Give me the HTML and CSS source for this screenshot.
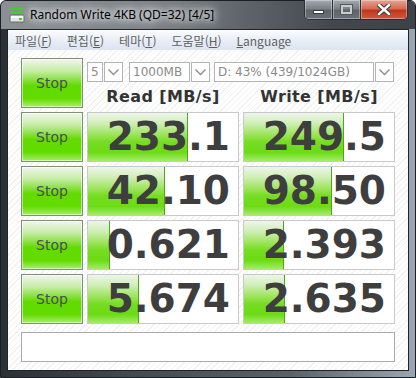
FILE: index.html
```html
<!DOCTYPE html>
<html lang="ko">
<head>
    <meta charset="UTF-8">
    <title>Random Write 4KB (QD=32) [4/5]</title>
    <link rel="stylesheet" href="styles.css">
</head>
<body>

    <div class="window">
        <!-- Title Bar -->
        <div class="titlebar">
            <svg class="app-icon" width="16" height="16" viewBox="0 0 16 16">
                <rect x="1" y="0" width="13" height="3" fill="#3fcf2a"/>
                <rect x="1" y="4" width="13" height="3" fill="#3fcf2a"/>
                <rect x="1" y="8" width="14" height="7" rx="1" fill="#e4e4e4" stroke="#6a6a6a"/>
                <rect x="2" y="9" width="12" height="2" fill="#ffffff"/>
                <rect x="10" y="11" width="3" height="2" fill="#3fcf2a"/>
            </svg>
            <span class="title">Random Write 4KB (QD=32) [4/5]</span>
            <div class="caption-buttons">
                <div class="cap-btn cap-min"><span class="min-glyph"></span></div>
                <div class="cap-btn cap-max"><span class="max-glyph"></span></div>
                <div class="cap-btn cap-close">
                    <svg width="14" height="11" viewBox="0 0 14 11">
                        <path d="M2 1 L12 10 M12 1 L2 10" stroke="#3a3a3a" stroke-width="4.5" stroke-linecap="square"/>
                        <path d="M2 1 L12 10 M12 1 L2 10" stroke="#ffffff" stroke-width="2.5" stroke-linecap="square"/>
                    </svg>
                </div>
            </div>
        </div>

        <!-- Client Area -->
        <div class="client">
            <div class="menubar">
                <span class="menu-item">파일(<u>F</u>)</span>
                <span class="menu-item">편집(<u>E</u>)</span>
                <span class="menu-item">테마(<u>T</u>)</span>
                <span class="menu-item">도움말(<u>H</u>)</span>
                <span class="menu-item"><u>L</u>anguage</span>
            </div>

            <div class="content">
                <div class="bench">
                    <button class="stop">Stop</button>
                    <div class="header">
                        <div class="combos">
                            <div class="combo combo-count">
                                <span class="combo-text">5</span>
                                <span class="combo-arrow"><svg width="11" height="7" viewBox="0 0 11 7"><polyline points="0.5,0.5 5.5,5.5 10.5,0.5" fill="none" stroke="#8a8a8a" stroke-width="1.3"/></svg></span>
                            </div>
                            <div class="combo combo-size">
                                <span class="combo-text">1000MB</span>
                                <span class="combo-arrow"><svg width="11" height="7" viewBox="0 0 11 7"><polyline points="0.5,0.5 5.5,5.5 10.5,0.5" fill="none" stroke="#8a8a8a" stroke-width="1.3"/></svg></span>
                            </div>
                            <div class="combo combo-drive">
                                <span class="combo-text">D: 43% (439/1024GB)</span>
                                <span class="combo-arrow"><svg width="11" height="7" viewBox="0 0 11 7"><polyline points="0.5,0.5 5.5,5.5 10.5,0.5" fill="none" stroke="#8a8a8a" stroke-width="1.3"/></svg></span>
                            </div>
                        </div>
                        <div class="col-titles">
                            <span>Read [MB/s]</span>
                            <span>Write [MB/s]</span>
                        </div>
                    </div>

                    <button class="stop">Stop</button>
                    <div class="cell"><div class="bar" style="width: 100px"></div><span class="value">233.1</span></div>
                    <div class="cell"><div class="bar" style="width: 100px"></div><span class="value">249.5</span></div>

                    <button class="stop">Stop</button>
                    <div class="cell"><div class="bar" style="width: 77px"></div><span class="value">42.10</span></div>
                    <div class="cell"><div class="bar" style="width: 88px"></div><span class="value">98.50</span></div>

                    <button class="stop">Stop</button>
                    <div class="cell"><div class="bar" style="width: 22px"></div><span class="value">0.621</span></div>
                    <div class="cell"><div class="bar" style="width: 40px"></div><span class="value">2.393</span></div>

                    <button class="stop">Stop</button>
                    <div class="cell"><div class="bar" style="width: 51px"></div><span class="value">5.674</span></div>
                    <div class="cell"><div class="bar" style="width: 41px"></div><span class="value">2.635</span></div>
                </div>

                <div class="comment"></div>
            </div>
        </div>
    </div>

</body>
</html>
```

FILE: styles.css
```css
/* General Styles */
* {
    margin: 0;
    padding: 0;
    box-sizing: border-box;
}

body {
    width: 416px;
    height: 378px;
    overflow: hidden;
    background: #ffffff;
}

/* Window Frame */
.window {
    width: 416px;
    height: 378px;
    border: 1px solid #1b1f23;
    border-radius: 6px 6px 0 0;
    background: linear-gradient(90deg, #2a3036 0%, #454c52 35%, #5a6268 70%, #9aa6b2 100%);
    display: flex;
    flex-direction: column;
}

/* Title Bar */
.titlebar {
    height: 28px;
    display: flex;
    align-items: flex-start;
    background: linear-gradient(90deg, #8b9095 0%, #7f8489 35%, #5a6065 62%, #42484d 80%, #3c4247 100%);
    border-radius: 5px 5px 0 0;
}

.app-icon {
    margin: 6px 0 0 8px;
}

.title {
    margin: 6px 0 0 5px;
    font-family: "Noto Sans", sans-serif;
    font-size: 12px;
    line-height: 16px;
    color: #000;
    text-shadow: 0 0 6px #ffffff, 0 0 10px #e8ecef, 0 0 14px #d0d5da;
}

.caption-buttons {
    margin-left: auto;
    margin-right: 7px;
    margin-top: -1px;
    display: flex;
    height: 20px;
    border: 1px solid #2c3034;
    border-top: none;
    border-radius: 0 0 5px 5px;
    overflow: hidden;
}

.cap-btn {
    height: 19px;
    display: flex;
    align-items: center;
    justify-content: center;
    border-right: 1px solid #2c3034;
    box-shadow: inset 0 0 0 1px rgba(255, 255, 255, 0.35);
}

.cap-min,
.cap-max {
    width: 28px;
    background: linear-gradient(#a4aaaf 0%, #7b8287 45%, #5e656a 55%, #6a7277 100%);
}

.cap-close {
    width: 46px;
    border-right: none;
    background: linear-gradient(#e3a597 0%, #d46a53 45%, #c1361c 55%, #cf5a3c 100%);
}

.min-glyph {
    width: 11px;
    height: 4px;
    margin-top: 5px;
    background: #ffffff;
    border: 1px solid #3a3a3a;
}

.max-glyph {
    width: 11px;
    height: 9px;
    border: 2px solid #c8cbce;
    outline: 1px solid #55595c;
}

/* Client Area */
.client {
    margin: 0 6px 0 6px;
    height: 342px;
    border: 1px solid #1e2327;
    background: repeating-linear-gradient(135deg, #ffffff 0px, #ffffff 3px, #f1f1f1 3px, #f1f1f1 4px);
}

.menubar {
    height: 20px;
    display: flex;
    align-items: center;
    gap: 15px;
    padding-left: 7px;
    background: linear-gradient(#f8fafd, #e6ecf5 60%, #dbe4f1);
    border-top: 1px solid #ffffff;
}

.menu-item {
    font-family: "Noto Sans CJK KR", "Noto Sans", sans-serif;
    font-size: 12px;
    line-height: 16px;
    color: #5f5f5f;
}

.menu-item u {
    text-underline-offset: 1px;
}

.content {
    padding: 8px 0 0 13px;
}

/* Benchmark Grid */
.bench {
    display: grid;
    grid-template-columns: 62px 152px 152px;
    grid-auto-rows: 50px;
    gap: 4px;
}

.stop {
    font-family: "DejaVu Sans", sans-serif;
    font-size: 14px;
    color: #4d4d4d;
    border: 1px solid #7c9273;
    background: linear-gradient(#f2f6ef 0%, #c6eca6 25%, #86e03a 45%, #62dc00 55%, #62dc00 82%, #a8ee6c 100%);
    box-shadow: inset 0 0 0 1px rgba(255, 255, 255, 0.5);
    cursor: pointer;
}

/* Header row */
.header {
    grid-column: span 2;
    display: flex;
    flex-direction: column;
    padding-top: 4px;
}

.combos {
    display: flex;
    height: 20px;
}

.combo {
    display: flex;
    height: 20px;
    font-family: "DejaVu Sans", sans-serif;
    font-size: 12px;
    color: #8a8a8a;
}

.combo-count {
    width: 36px;
}

.combo-size {
    width: 81px;
    margin-left: 6px;
}

.combo-drive {
    width: 180px;
    margin-left: 4px;
}

.combo-text {
    flex: 1;
    border: 1px solid #b4b4b4;
    background: #ffffff;
    padding-left: 3px;
    line-height: 18px;
    white-space: nowrap;
    overflow: hidden;
}

.combo-arrow {
    width: 19px;
    border: 1px solid #b4b4b4;
    margin-left: 1px;
    background: #ffffff;
    display: flex;
    align-items: center;
    justify-content: center;
}

.col-titles {
    display: grid;
    grid-template-columns: 152px 152px;
    gap: 4px;
    margin-top: 5px;
}

.col-titles span {
    text-align: center;
    font-family: "DejaVu Sans", sans-serif;
    font-weight: bold;
    font-size: 16px;
    letter-spacing: 0.4px;
    line-height: 20px;
    color: #333333;
}

/* Result cells */
.cell {
    display: grid;
    border: 1px solid #c9c9c9;
    background: #ffffff;
}

.bar {
    grid-area: 1 / 1;
    height: 100%;
    background: linear-gradient(#eef5e9 0%, #d2efbb 20%, #9de45c 45%, #76dd22 60%, #6cdb14 82%, #a4ec6a 100%);
    border-right: 1px solid #4fa61e;
}

.value {
    grid-area: 1 / 1;
    align-self: center;
    text-align: right;
    padding-right: 8px;
    font-family: "DejaVu Sans", sans-serif;
    font-weight: bold;
    font-size: 39px;
    line-height: 46px;
    color: #3e3e3e;
}

/* Comment box */
.comment {
    width: 374px;
    height: 30px;
    margin-top: 8px;
    border: 1px solid #ababab;
    background: #ffffff;
}
```
